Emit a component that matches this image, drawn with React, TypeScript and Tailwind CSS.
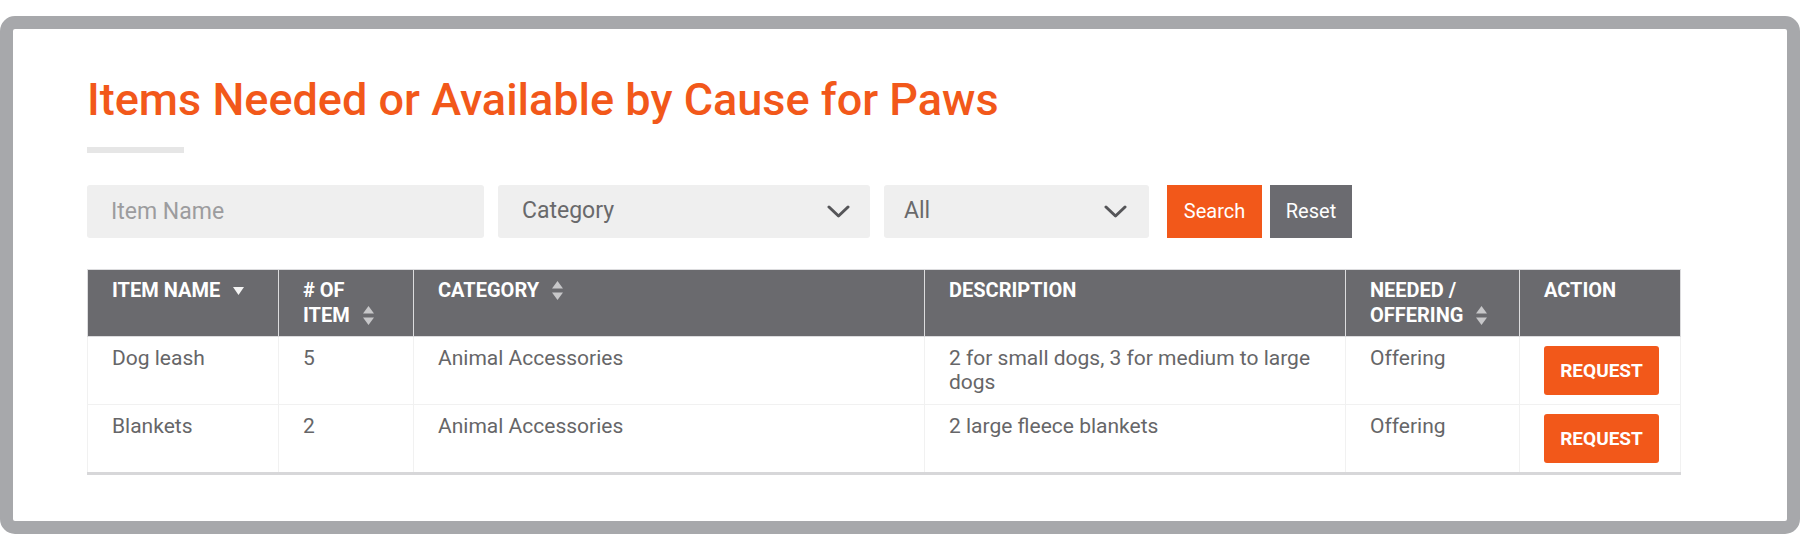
import React from 'react';

const ORANGE = 'bg-[#f2581a]';

function SortBoth() {
    return (
        <svg width="11" height="19" viewBox="0 0 11 19" className="inline-block align-[-3px] ml-[13px]">
            <polygon points="5.5,0 11,7.5 0,7.5" fill="#c7c7c9" />
            <polygon points="0,11.5 11,11.5 5.5,19" fill="#c7c7c9" />
        </svg>
    );
}

function SortDown() {
    return (
        <svg width="11" height="8" viewBox="0 0 11 8" className="inline-block align-[2px] ml-[13px]">
            <polygon points="0,0 11,0 5.5,8" fill="#f4f4f4" />
        </svg>
    );
}

function Chevron() {
    return (
        <svg width="23" height="13" viewBox="0 0 23 13" fill="none">
            <path d="M2 2 L11.5 11 L21 2" stroke="#555558" strokeWidth="3" strokeLinecap="round" strokeLinejoin="round" />
        </svg>
    );
}

const rows = [
    { name: 'Dog leash', qty: '5', category: 'Animal Accessories', desc: '2 for small dogs, 3 for medium to large dogs', type: 'Offering' },
    { name: 'Blankets', qty: '2', category: 'Animal Accessories', desc: '2 large fleece blankets', type: 'Offering' },
];

export default function App() {
    const th = 'bg-[#6a6a6e] text-white font-bold text-[20px] leading-[25px] uppercase text-left align-top px-[24px] pt-[8px] pb-[8px] border border-[#dcdcde]';
    const td = 'px-[24px] py-[9px] text-[21px] leading-[24px] text-[#666668] align-top border border-[#f1f1f1]';

    return (
        <div className="w-[1800px] h-[550px] bg-white pt-[16px] font-['Roboto',sans-serif]">
            <div className="h-[518px] border-[13px] border-[#a7a8ab] rounded-[15px] bg-white pl-[74px] pt-[44px]">
                <h1 className="text-[45px] leading-[54px] font-medium text-[#f2581a]">
                    Items Needed or Available by Cause for Paws
                </h1>
                <div className="mt-[20px] w-[97px] h-[6px] bg-[#e6e6e6]" />

                <div className="mt-[32px] flex h-[53px]">
                    <input
                        className="w-[397px] h-full bg-[#efefef] rounded-[3px] px-[24px] text-[23px] text-[#666] placeholder:text-[#9c9c9e] outline-none"
                        placeholder="Item Name"
                    />
                    <div className="ml-[14px] w-[372px] h-full bg-[#efefef] rounded-[3px] pl-[24px] pr-[20px] flex items-center justify-between text-[23px] text-[#69696b]">
                        <span>Category</span>
                        <Chevron />
                    </div>
                    <div className="ml-[14px] w-[265px] h-full bg-[#efefef] rounded-[3px] pl-[20px] pr-[22px] flex items-center justify-between text-[23px] text-[#69696b]">
                        <span>All</span>
                        <Chevron />
                    </div>
                    <button className={`ml-[18px] w-[95px] h-full ${ORANGE} text-white text-[20px] leading-none pb-[2px]`}>Search</button>
                    <button className="ml-[8px] w-[82px] h-full bg-[#6b6b70] text-white text-[20px] leading-none pb-[2px]">Reset</button>
                </div>

                <table className="mt-[31px] w-[1593px] table-fixed border-collapse border-b-[3px] border-b-[#d7d7d9]">
                    <colgroup>
                        <col className="w-[191px]" />
                        <col className="w-[135px]" />
                        <col className="w-[511px]" />
                        <col className="w-[421px]" />
                        <col className="w-[174px]" />
                        <col className="w-[161px]" />
                    </colgroup>
                    <thead>
                        <tr className="h-[66px]">
                            <th className={th}>Item Name<SortDown /></th>
                            <th className={th}># of<br />Item<SortBoth /></th>
                            <th className={th}>Category<SortBoth /></th>
                            <th className={th}>Description</th>
                            <th className={th}>Needed /<br />Offering<SortBoth /></th>
                            <th className={th}>Action</th>
                        </tr>
                    </thead>
                    <tbody>
                        {rows.map((r) => (
                            <tr key={r.name}>
                                <td className={td}>{r.name}</td>
                                <td className={td}>{r.qty}</td>
                                <td className={td}>{r.category}</td>
                                <td className={td}>{r.desc}</td>
                                <td className={td}>{r.type}</td>
                                <td className={`${td} px-[23px]`}>
                                    <button className={`w-[115px] h-[49px] ${ORANGE} rounded-[3px] text-white font-bold text-[19px] uppercase`}>
                                        Request
                                    </button>
                                </td>
                            </tr>
                        ))}
                    </tbody>
                </table>
            </div>
        </div>
    );
}
